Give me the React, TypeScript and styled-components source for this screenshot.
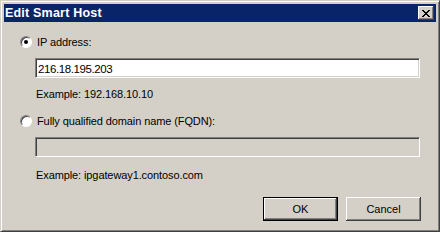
import React, { useState } from 'react';
import styled, { createGlobalStyle } from 'styled-components';

const GlobalStyle = createGlobalStyle`
  html, body {
    margin: 0;
    padding: 0;
    background: #d4d0c8;
  }
  body {
    font-family: Tahoma, "Liberation Sans", Arial, sans-serif;
    font-size: 11px;
    color: #000;
  }
`;

const Window = styled.div`
  width: 440px;
  height: 232px;
  box-sizing: border-box;
  background: #d4d0c8;
  border-top: 1px solid #d4d0c8;
  border-left: 1px solid #d4d0c8;
  border-right: 1px solid #404040;
  border-bottom: 1px solid #404040;
  box-shadow: inset 1px 1px 0 #fff, inset -1px -1px 0 #808080;
  padding: 3px;
  display: flex;
  flex-direction: column;
`;

const TitleBar = styled.div`
  height: 18px;
  background: #0a246a;
  display: flex;
  align-items: center;
  justify-content: space-between;
  padding: 0 2px 0 1px;
`;

const Title = styled.span`
  color: #fff;
  font-weight: bold;
  font-size: 12.5px;
  letter-spacing: 0.2px;
`;

const CloseButton = styled.button`
  width: 16px;
  height: 14px;
  padding: 0;
  margin: 0;
  background: #d4d0c8;
  border: none;
  box-shadow: inset -1px -1px 0 #404040, inset 1px 1px 0 #fff,
    inset -2px -2px 0 #808080, inset 2px 2px 0 #d4d0c8;
  display: flex;
  align-items: center;
  justify-content: center;
`;

const Body = styled.div`
  flex: 1;
  display: flex;
  flex-direction: column;
  padding: 12px 15px 0 16px;
`;

const OptionRow = styled.label`
  display: flex;
  align-items: center;
  gap: 5px;
  height: 16px;
  letter-spacing: -0.1px;
  cursor: default;
`;

const Radio = styled.span<{ $checked?: boolean }>`
  width: 12px;
  height: 12px;
  border-radius: 50%;
  box-sizing: border-box;
  background: #fff;
  border: 1px solid;
  border-color: #808080 #fff #fff #808080;
  box-shadow: inset 1px 1px 0 #404040;
  display: flex;
  align-items: center;
  justify-content: center;

  &::after {
    content: '';
    width: 4px;
    height: 4px;
    border-radius: 50%;
    background: #000;
    display: ${(p) => (p.$checked ? 'block' : 'none')};
  }
`;

const TextBox = styled.input<{ $disabled?: boolean }>`
  box-sizing: border-box;
  width: 385px;
  height: 20px;
  margin: 8px 0 0 15px;
  padding: 1px 2px 0;
  font-family: inherit;
  font-size: 11.5px;
  letter-spacing: -0.4px;
  color: #000;
  background: ${(p) => (p.$disabled ? '#d4d0c8' : '#fff')};
  border: 1px solid;
  border-color: #808080 #fff #fff #808080;
  box-shadow: inset 1px 1px 0 #404040, inset -1px -1px 0 #d4d0c8;
  outline: none;
`;

const Hint = styled.div<{ $gap?: number }>`
  margin: ${(p) => p.$gap ?? 10}px 0 0 16px;
  height: 13px;
  line-height: 13px;
  letter-spacing: -0.1px;
`;

const Spacer = styled.div<{ $h: number }>`
  height: ${(p) => p.$h}px;
`;

const Footer = styled.div`
  display: flex;
  justify-content: flex-end;
  gap: 8px;
  padding: 0 15px 0 0;
  margin-top: auto;
  margin-bottom: 7px;
`;

const Button = styled.button<{ $default?: boolean }>`
  width: 75px;
  height: 24px;
  font-family: inherit;
  font-size: 11px;
  color: #000;
  background: #d4d0c8;
  border: ${(p) => (p.$default ? '1px solid #000' : 'none')};
  box-shadow: ${(p) =>
    p.$default
      ? 'inset -1px -1px 0 #404040, inset 1px 1px 0 #fff, inset -2px -2px 0 #808080'
      : 'inset -1px -1px 0 #404040, inset 1px 1px 0 #fff, inset -2px -2px 0 #808080, inset 2px 2px 0 #d4d0c8'};
  padding: 0;
`;

const CloseIcon = () => (
  <svg width="8" height="7" viewBox="0 0 8 7" shapeRendering="crispEdges">
    <path
      d="M0 0h2v1H0zM6 0h2v1H6zM1 1h2v1H1zM5 1h2v1H5zM2 2h4v1H2zM3 3h2v1H3zM2 4h4v1H2zM1 5h2v1H1zM5 5h2v1H5zM0 6h2v1H0zM6 6h2v1H6z"
      fill="#000"
    />
  </svg>
);

const App: React.FC = () => {
  const [mode, setMode] = useState<'ip' | 'fqdn'>('ip');
  const [ip, setIp] = useState('216.18.195.203');

  return (
    <>
      <GlobalStyle />
      <Window>
        <TitleBar>
          <Title>Edit Smart Host</Title>
          <CloseButton aria-label="Close">
            <CloseIcon />
          </CloseButton>
        </TitleBar>
        <Body>
          <OptionRow onClick={() => setMode('ip')}>
            <Radio $checked={mode === 'ip'} />
            IP address:
          </OptionRow>
          <TextBox value={ip} onChange={(e) => setIp(e.target.value)} />
          <Hint>Example: 192.168.10.10</Hint>
          <Spacer $h={12} />
          <OptionRow onClick={() => setMode('fqdn')}>
            <Radio $checked={mode === 'fqdn'} />
            Fully qualified domain name (FQDN):
          </OptionRow>
          <TextBox $disabled={mode !== 'fqdn'} disabled={mode !== 'fqdn'} defaultValue="" />
          <Hint $gap={12}>Example: ipgateway1.contoso.com</Hint>
        </Body>
        <Footer>
          <Button $default>OK</Button>
          <Button>Cancel</Button>
        </Footer>
      </Window>
    </>
  );
};

export default App;
